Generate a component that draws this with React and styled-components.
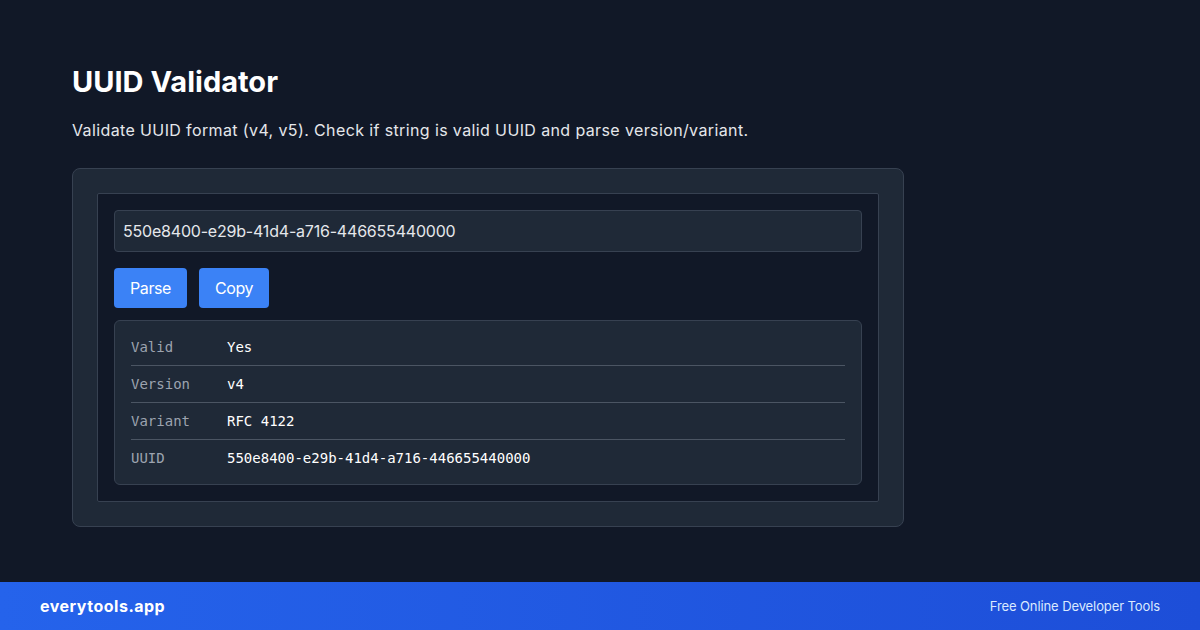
import React, { useState } from 'react';
import styled, { createGlobalStyle } from 'styled-components';

const GlobalStyle = createGlobalStyle`
  html, body {
    margin: 0;
    padding: 0;
    background: #111827;
  }
  body {
    font-family: Inter, "Noto Sans", sans-serif;
    color: #f9fafb;
  }
  * { box-sizing: border-box; }
`;

const Page = styled.div`
  width: 1200px;
  height: 630px;
  display: flex;
  flex-direction: column;
  background: #111827;
`;

const Main = styled.main`
  flex: 1;
  padding: 64px 72px 0;
`;

const Title = styled.h1`
  margin: 0;
  font-size: 29px;
  line-height: 36px;
  font-weight: 700;
  color: #ffffff;
`;

const Subtitle = styled.p`
  margin: 18px 0 26px;
  font-size: 16px;
  line-height: 24px;
  letter-spacing: 0.38px;
  color: #e5e7eb;
`;

const Card = styled.section`
  width: 832px;
  padding: 24px;
  background: #1f2937;
  border: 1px solid #374151;
  border-radius: 8px;
`;

const Panel = styled.div`
  padding: 16px;
  background: #111827;
  border: 1px solid #374151;
  border-radius: 2px;
`;

const Input = styled.input`
  display: block;
  width: 100%;
  height: 42px;
  padding: 0 8px;
  margin-bottom: 16px;
  background: #1f2937;
  border: 1px solid #374151;
  border-radius: 4px;
  color: #e5e7eb;
  font-family: Inter, "Noto Sans", sans-serif;
  font-size: 16px;
  letter-spacing: -0.2px;
  outline: none;
`;

const ButtonRow = styled.div`
  display: flex;
  gap: 12px;
  margin-bottom: 12px;
`;

const Button = styled.button`
  height: 40px;
  padding: 0 16px;
  background: #3b82f6;
  color: #ffffff;
  border: none;
  border-radius: 4px;
  font-family: Inter, "Noto Sans", sans-serif;
  font-size: 16px;
  letter-spacing: -0.4px;
  cursor: pointer;
`;

const Result = styled.div`
  padding: 8px 16px;
  background: #1f2937;
  border: 1px solid #374151;
  border-radius: 6px;
`;

const Row = styled.div`
  display: flex;
  padding: 10px 0;
  line-height: 16px;
  font-family: "DejaVu Sans Mono", "Liberation Mono", monospace;
  font-size: 14px;
  & + & {
    border-top: 1px solid #4b5563;
  }
`;

const Label = styled.span`
  width: 96px;
  color: #9ca3af;
`;

const Value = styled.span`
  color: #ffffff;
`;

const Footer = styled.footer`
  height: 48px;
  padding: 0 40px;
  display: flex;
  align-items: center;
  justify-content: space-between;
  background: linear-gradient(90deg, #2563eb, #1d4ed8);
`;

const Brand = styled.span`
  font-size: 16px;
  font-weight: 700;
  letter-spacing: 0.5px;
  color: #ffffff;
`;

const Tagline = styled.span`
  font-size: 13px;
  letter-spacing: -0.1px;
  color: #dbeafe;
`;

const uuid = '550e8400-e29b-41d4-a716-446655440000';

const rows = [
  ['Valid', 'Yes'],
  ['Version', 'v4'],
  ['Variant', 'RFC 4122'],
  ['UUID', uuid],
];

const App = () => {
  const [value, setValue] = useState(uuid);

  return (
    <Page>
      <GlobalStyle />
      <Main>
        <Title>UUID Validator</Title>
        <Subtitle>
          Validate UUID format (v4, v5). Check if string is valid UUID and parse version/variant.
        </Subtitle>
        <Card>
          <Panel>
            <Input value={value} onChange={(e) => setValue(e.target.value)} />
            <ButtonRow>
              <Button>Parse</Button>
              <Button>Copy</Button>
            </ButtonRow>
            <Result>
              {rows.map(([label, val]) => (
                <Row key={label}>
                  <Label>{label}</Label>
                  <Value>{val}</Value>
                </Row>
              ))}
            </Result>
          </Panel>
        </Card>
      </Main>
      <Footer>
        <Brand>everytools.app</Brand>
        <Tagline>Free Online Developer Tools</Tagline>
      </Footer>
    </Page>
  );
};

export default App;
